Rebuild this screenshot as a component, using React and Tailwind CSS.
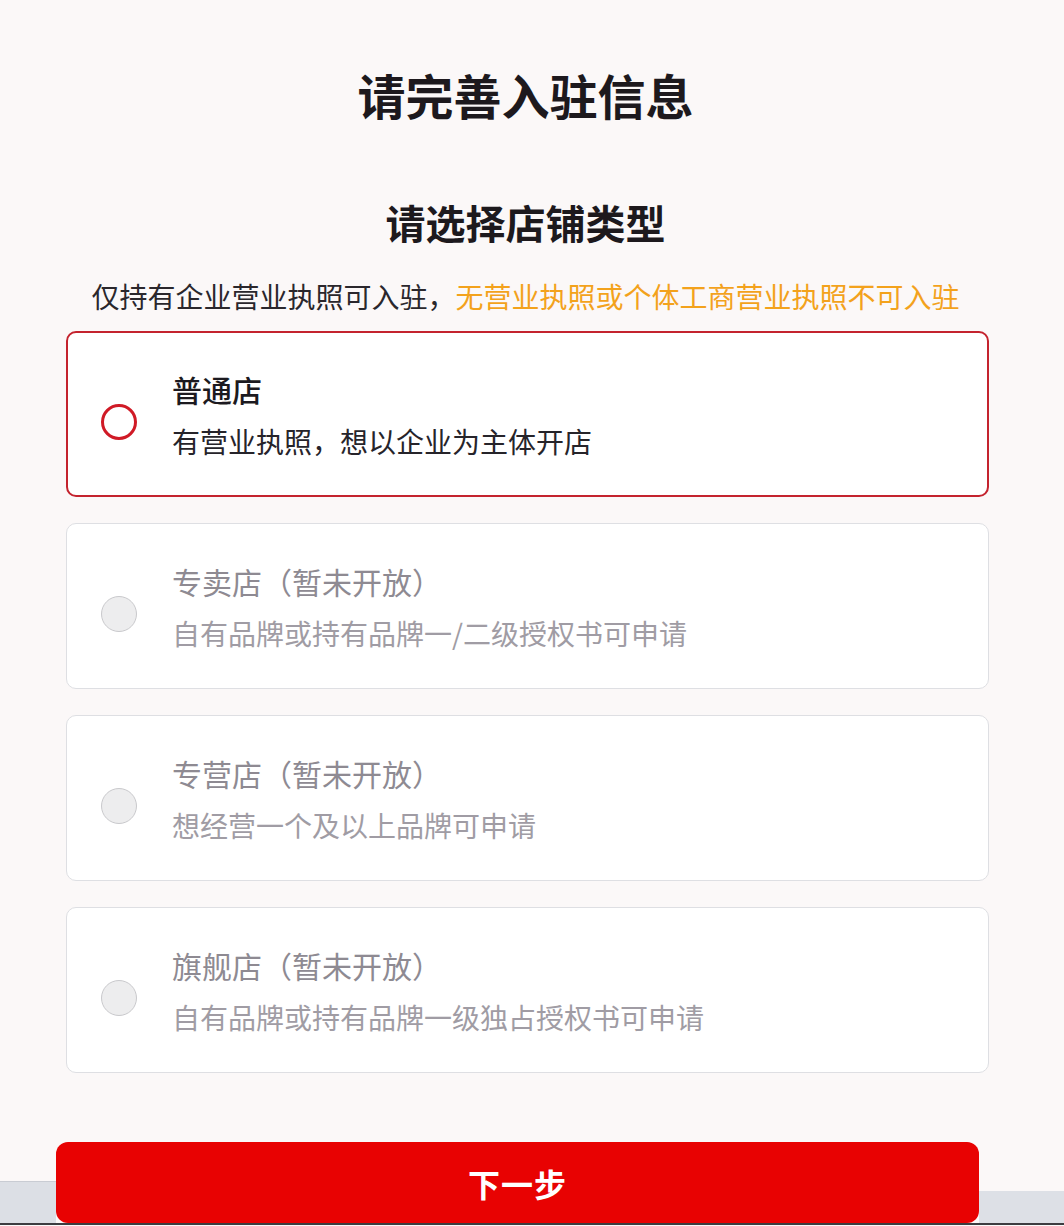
import React, { useState } from 'react';

const shopTypes = [
  { id: 'normal', name: '普通店', desc: '有营业执照，想以企业为主体开店', open: true },
  { id: 'special', name: '专卖店（暂未开放）', desc: '自有品牌或持有品牌一/二级授权书可申请', open: false },
  { id: 'exclusive', name: '专营店（暂未开放）', desc: '想经营一个及以上品牌可申请', open: false },
  { id: 'flagship', name: '旗舰店（暂未开放）', desc: '自有品牌或持有品牌一级独占授权书可申请', open: false },
];

function ShopCard({ item, selected, onSelect }) {
  if (!item.open) {
    return (
      <div className="flex items-center h-[166px] rounded-[10px] border border-[#dedfe3] bg-white pl-[34px]">
        <div className="mt-4 w-[36px] h-[36px] rounded-full border-[1.5px] border-[#c9c9cc] bg-[#ededee] shrink-0" />
        <div className="ml-[35px] flex flex-col">
          <div className="text-[30px] leading-[40px] text-[#8e8a92]">{item.name}</div>
          <div className="mt-[13px] text-[28px] leading-[38px] text-[#a09ca4]">{item.desc}</div>
        </div>
      </div>
    );
  }

  return (
    <div
      onClick={onSelect}
      className="flex items-center h-[166px] rounded-[10px] border-2 border-[#c4232e] bg-white pl-[33px] cursor-pointer"
    >
      <div className="mt-4 w-[36px] h-[36px] rounded-full border-[3px] border-[#d01a26] bg-white shrink-0 flex items-center justify-center">
        {selected && <div className="w-[16px] h-[16px] rounded-full bg-[#d01a26]" />}
      </div>
      <div className="ml-[35px] flex flex-col">
        <div className="text-[30px] leading-[40px] font-medium text-[#1c1a20]">{item.name}</div>
        <div className="mt-[13px] text-[28px] leading-[38px] text-[#26242a]">{item.desc}</div>
      </div>
    </div>
  );
}

export default function App() {
  const [selected, setSelected] = useState(null);

  return (
    <div
      className="w-full min-h-[1226px] bg-[#fbf8f8] flex flex-col"
      style={{ fontFamily: '"Noto Sans CJK SC", "Noto Sans", sans-serif' }}
    >
      {/* Header */}
      <div className="pl-[62px] w-[989px] flex flex-col items-center">
        <h1 className="mt-[63px] text-[48px] leading-[62px] font-bold text-[#1d191d]">请完善入驻信息</h1>
        <h2 className="mt-[71px] text-[40px] leading-[52px] font-bold text-[#1d191d]">请选择店铺类型</h2>
        <p className="mt-[30px] text-[28px] leading-[36px] text-[#2a272c] whitespace-nowrap">
          仅持有企业营业执照可入驻，<span className="text-[#f3a21c]">无营业执照或个体工商营业执照不可入驻</span>
        </p>
      </div>

      {/* Shop types */}
      <div className="mt-[17px] ml-[66px] w-[923px] flex flex-col gap-[26px]">
        {shopTypes.map((item) => (
          <ShopCard
            key={item.id}
            item={item}
            selected={selected === item.id}
            onSelect={() => setSelected(item.id)}
          />
        ))}
      </div>

      {/* Bottom bar */}
      <div className="mt-[69px] flex items-end">
        <div className="w-[56px] h-[42px] bg-[#dcdfe5] border-t border-[#c9ccd3]" />
        <button className="w-[923px] h-[81px] rounded-[12px] bg-[#e80202] text-white text-[32px] font-bold tracking-[1px]">
          下一步
        </button>
        <div className="flex-1 h-[32px] bg-[#dde0e6]" />
      </div>
      <div className="h-[2px] bg-[#3c3c40]" />
    </div>
  );
}
